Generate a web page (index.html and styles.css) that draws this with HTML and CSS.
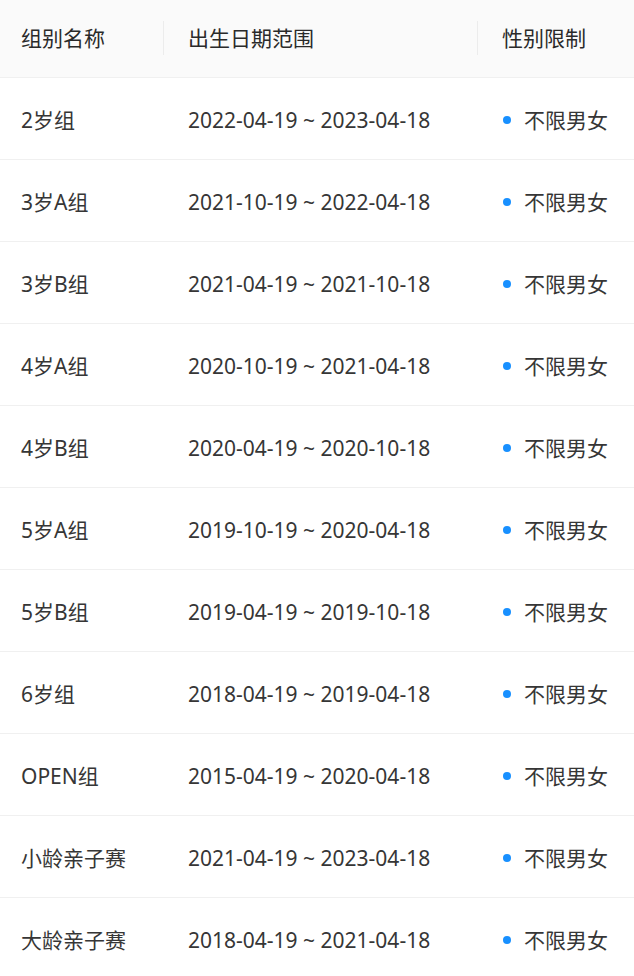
FILE: index.html
```html
<!DOCTYPE html>
<html lang="zh">
<head>
<meta charset="utf-8">
<title>组别</title>
<link rel="stylesheet" href="styles.css">
</head>
<body>
<div class="table">
  <div class="row head">
    <div class="cell c1">组别名称</div>
    <div class="cell c2 sep">出生日期范围</div>
    <div class="cell c3 sep">性别限制</div>
  </div>
  <div class="row"><div class="cell c1">2岁组</div><div class="cell c2">2022-04-19 ~ 2023-04-18</div><div class="cell c3"><span class="dot"></span>不限男女</div></div>
  <div class="row"><div class="cell c1">3岁A组</div><div class="cell c2">2021-10-19 ~ 2022-04-18</div><div class="cell c3"><span class="dot"></span>不限男女</div></div>
  <div class="row"><div class="cell c1">3岁B组</div><div class="cell c2">2021-04-19 ~ 2021-10-18</div><div class="cell c3"><span class="dot"></span>不限男女</div></div>
  <div class="row"><div class="cell c1">4岁A组</div><div class="cell c2">2020-10-19 ~ 2021-04-18</div><div class="cell c3"><span class="dot"></span>不限男女</div></div>
  <div class="row"><div class="cell c1">4岁B组</div><div class="cell c2">2020-04-19 ~ 2020-10-18</div><div class="cell c3"><span class="dot"></span>不限男女</div></div>
  <div class="row"><div class="cell c1">5岁A组</div><div class="cell c2">2019-10-19 ~ 2020-04-18</div><div class="cell c3"><span class="dot"></span>不限男女</div></div>
  <div class="row"><div class="cell c1">5岁B组</div><div class="cell c2">2019-04-19 ~ 2019-10-18</div><div class="cell c3"><span class="dot"></span>不限男女</div></div>
  <div class="row"><div class="cell c1">6岁组</div><div class="cell c2">2018-04-19 ~ 2019-04-18</div><div class="cell c3"><span class="dot"></span>不限男女</div></div>
  <div class="row"><div class="cell c1">OPEN组</div><div class="cell c2">2015-04-19 ~ 2020-04-18</div><div class="cell c3"><span class="dot"></span>不限男女</div></div>
  <div class="row"><div class="cell c1">小龄亲子赛</div><div class="cell c2">2021-04-19 ~ 2023-04-18</div><div class="cell c3"><span class="dot"></span>不限男女</div></div>
  <div class="row"><div class="cell c1">大龄亲子赛</div><div class="cell c2">2018-04-19 ~ 2021-04-18</div><div class="cell c3"><span class="dot"></span>不限男女</div></div>
</div>
</body>
</html>
```

FILE: styles.css
```css
html, body {
  margin: 0;
  padding: 0;
  background: #fff;
}
body {
  font-family: "Noto Sans", "Noto Sans CJK SC", sans-serif;
  font-size: 21px;
  color: #363636;
  overflow: hidden;
}
.table {
  width: 634px;
}
.row {
  display: grid;
  grid-template-columns: 164px 314px 156px;
  height: 81px;
  border-bottom: 1px solid #f0f0f0;
  align-items: center;
}
.row .cell {
  padding-top: 3px;
}
.row.head {
  height: 77px;
  background: #fafafa;
  color: #2a2a2a;
}
.row.head .cell {
  padding-top: 0;
}
.cell {
  position: relative;
  display: flex;
  align-items: center;
  white-space: nowrap;
  line-height: 1;
}
.c1 { padding-left: 21px; }
.c2 { padding-left: 24px; }
.c3 { padding-left: 24px; }
.sep::before {
  content: "";
  position: absolute;
  left: -1px;
  top: 50%;
  width: 1px;
  height: 34px;
  margin-top: -18px;
  background: #ececec;
}
.dot {
  display: inline-block;
  width: 8px;
  height: 8px;
  border-radius: 50%;
  background: #1890ff;
  margin-left: 1px;
  margin-right: 13px;
}
```
